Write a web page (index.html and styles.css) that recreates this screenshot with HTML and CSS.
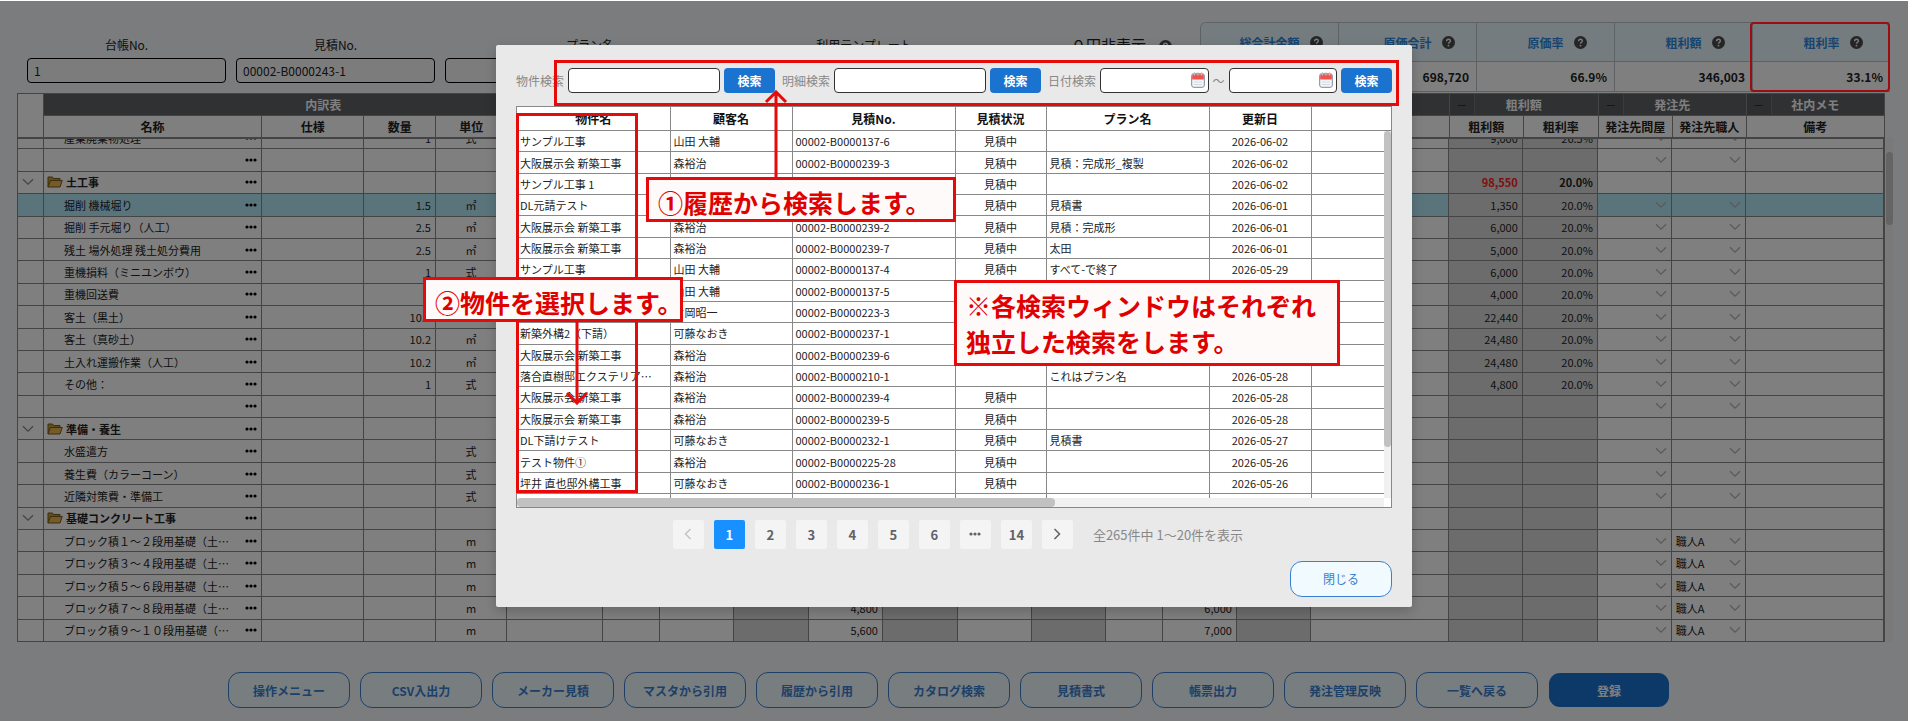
FILE: index.html
```
<!DOCTYPE html>
<html lang="ja">
<head>
    <meta charset="UTF-8">
    <meta name="viewport" content="width=device-width, initial-scale=1.0">
    <title>見積作成</title>
    <link rel="stylesheet" href="styles.css">
</head>
<body>

    <!-- アイコン定義 -->
    <svg class="sprite" aria-hidden="true">
        <symbol id="icon-help" viewBox="0 0 14 14">
            <circle cx="7" cy="7" r="7" fill="#4a4a4a"/>
            <path d="M5 5.6C5 4.2 5.9 3.5 7 3.5s2 .7 2 1.8c0 1.4-2 1.5-2 3" fill="none" stroke="#f6f8fc" stroke-width="1.5"/>
            <circle cx="7" cy="10.3" r="1" fill="#f6f8fc"/>
        </symbol>
        <symbol id="icon-dots" viewBox="0 0 12 4">
            <circle cx="2" cy="2" r="1.6"/>
            <circle cx="6" cy="2" r="1.6"/>
            <circle cx="10" cy="2" r="1.6"/>
        </symbol>
        <symbol id="icon-down" viewBox="0 0 12 8">
            <path d="M1 1.2l5 5 5-5" fill="none" stroke="currentColor" stroke-width="1.3"/>
        </symbol>
        <symbol id="icon-folder" viewBox="0 0 16 12">
            <path d="M1 11V1h4.500l1.200 1.500H13V4.500" fill="#c99a3a" stroke="#7a5a1c"/>
            <path d="M1 11L3.500 4.500H15.300L13 11z" fill="#e8b850" stroke="#7a5a1c"/>
        </symbol>
        <symbol id="icon-calendar" viewBox="0 0 14 16">
            <rect x=".7" y="1.700" width="12.600" height="13.600" rx="2" fill="#f4f6f9" stroke="#7c8696"/>
            <path d="M1.200 7.500V3.700a1.500 1.500 0 0 1 1.500-1.500h8.600a1.500 1.500 0 0 1 1.500 1.500v3.800z" fill="#f0504e"/>
            <path d="M3.500 .3v3.200M7 .3v3.200M10.500 .3v3.200" stroke="#b9c0ca" stroke-width="1.200"/>
            <path d="M3 10h8M3 12.500h8" stroke="#d3d9e2"/>
        </symbol>
    </svg>

    <div class="screen">

        <!-- 見積ヘッダー -->
        <div class="topbar">
            <div class="fields">
                <div class="field field-s">
                    <label for="ledgerNo">台帳No.</label>
                    <input type="text" id="ledgerNo" value="1">
                </div>
                <div class="field field-s">
                    <label for="estimateNo">見積No.</label>
                    <input type="text" id="estimateNo" value="00002-B0000243-1">
                </div>
                <div class="field field-l">
                    <label for="planName">プラン名</label>
                    <input type="text" id="planName">
                </div>
                <div class="field field-m">
                    <label for="template">利用テンプレート</label>
                    <input type="text" id="template">
                </div>
                <div class="field field-check">
                    <label for="hideZero">０円非表示 <svg class="help"><use href="#icon-help"/></svg></label>
                    <input type="checkbox" id="hideZero">
                </div>
            </div>

            <div class="summary">
                <div class="sum-cell">
                    <div class="sum-label"><span>総合計金額</span><svg class="help"><use href="#icon-help"/></svg></div>
                    <div class="sum-value"></div>
                </div>
                <div class="sum-cell">
                    <div class="sum-label"><span>原価合計</span><svg class="help"><use href="#icon-help"/></svg></div>
                    <div class="sum-value">698,720</div>
                </div>
                <div class="sum-cell">
                    <div class="sum-label"><span>原価率</span><svg class="help"><use href="#icon-help"/></svg></div>
                    <div class="sum-value">66.9%</div>
                </div>
                <div class="sum-cell">
                    <div class="sum-label"><span>粗利額</span><svg class="help"><use href="#icon-help"/></svg></div>
                    <div class="sum-value">346,003</div>
                </div>
                <div class="sum-cell">
                    <div class="sum-label"><span>粗利率</span><svg class="help"><use href="#icon-help"/></svg></div>
                    <div class="sum-value">33.1%</div>
                </div>
            </div>
        </div>

        <!-- 内訳表 -->
        <div class="sheet">
            <table class="grid grid-head">
                <thead>
                    <tr class="group">
                        <th rowspan="2" class="corner"></th>
                        <th colspan="5">内訳表</th>
                        <th colspan="11"></th>
                        <th colspan="2"><button type="button" class="fold">－</button>粗利額</th>
                        <th colspan="2"><button type="button" class="fold">－</button>発注先</th>
                        <th><button type="button" class="fold">－</button>社内メモ</th>
                    </tr>
                    <tr>
                        <th>名称</th><th>仕様</th><th>数量</th><th>単位</th><th></th>
                        <th></th><th></th><th></th><th></th><th></th><th></th>
                        <th></th><th></th><th></th><th></th><th></th>
                        <th>粗利額</th><th>粗利率</th><th>発注先問屋</th><th>発注先職人</th><th>備考</th>
                    </tr>
                </thead>
            </table>
            <div class="grid-scroll">
                <table class="grid grid-body">
                    <tbody id="detailRows"></tbody>
                </table>
            </div>
            <div class="sheet-bar"><div class="sheet-thumb"></div></div>
        </div>

        <!-- フッターボタン -->
        <div class="actions">
            <button type="button" class="action">操作メニュー</button>
            <button type="button" class="action">CSV入出力</button>
            <button type="button" class="action">メーカー見積</button>
            <button type="button" class="action">マスタから引用</button>
            <button type="button" class="action">履歴から引用</button>
            <button type="button" class="action">カタログ検索</button>
            <button type="button" class="action">見積書式</button>
            <button type="button" class="action">帳票出力</button>
            <button type="button" class="action">発注管理反映</button>
            <button type="button" class="action">一覧へ戻る</button>
            <button type="button" class="action action-main">登録</button>
        </div>

        <!-- 履歴検索ダイアログ -->
        <div class="mask">
            <div class="frame frame-total"></div>

            <div class="dialog" role="dialog" aria-label="履歴検索">
                <div class="search">
                    <label for="searchProject">物件検索</label>
                    <input type="text" id="searchProject">
                    <button type="button" class="search-btn">検索</button>
                    <label class="next" for="searchDetail">明細検索</label>
                    <input type="text" id="searchDetail">
                    <button type="button" class="search-btn">検索</button>
                    <label class="next" for="dateFrom">日付検索</label>
                    <div class="date">
                        <input type="text" id="dateFrom">
                        <svg><use href="#icon-calendar"/></svg>
                    </div>
                    <span>～</span>
                    <div class="date">
                        <input type="text" id="dateTo" aria-label="日付検索 終了">
                        <svg><use href="#icon-calendar"/></svg>
                    </div>
                    <button type="button" class="search-btn">検索</button>
                </div>

                <div class="history">
                    <table class="list list-head">
                        <colgroup><col class="c-name"><col class="c-client"><col class="c-no"><col class="c-state"><col class="c-plan"><col class="c-date"><col></colgroup>
                        <thead>
                            <tr><th>物件名</th><th>顧客名</th><th>見積No.</th><th>見積状況</th><th>プラン名</th><th>更新日</th><th></th></tr>
                        </thead>
                    </table>
                    <div class="history-view">
                        <div class="history-rows">
                            <table class="list list-body">
                                <colgroup><col class="c-name"><col class="c-client"><col class="c-no"><col class="c-state"><col class="c-plan"><col class="c-date"><col></colgroup>
                                <tbody id="historyRows"></tbody>
                            </table>
                        </div>
                        <div class="bar-y"><div class="thumb-y"></div></div>
                        <div class="bar-x"><div class="thumb-x"></div></div>
                    </div>
                </div>

                <div class="pager">
                    <button type="button" class="off" aria-label="前へ"><svg viewBox="0 0 8 12"><path d="M6.500 1L1.500 6l5 5"/></svg></button>
                    <button type="button" class="on">1</button>
                    <button type="button">2</button>
                    <button type="button">3</button>
                    <button type="button">4</button>
                    <button type="button">5</button>
                    <button type="button">6</button>
                    <button type="button" aria-label="続き"><svg class="more"><use href="#icon-dots"/></svg></button>
                    <button type="button">14</button>
                    <button type="button" aria-label="次へ"><svg viewBox="0 0 8 12"><path d="M1.500 1l5 5-5 5"/></svg></button>
                    <span>全265件中 1～20件を表示</span>
                </div>

                <div class="dialog-foot">
                    <button type="button" class="close">閉じる</button>
                </div>

                <!-- 操作説明 -->
                <div class="frame frame-search"></div>
                <div class="frame frame-name"></div>
                <svg class="arrow arrow-up" viewBox="0 0 24 88"><path d="M12 88V2M2 12L12 2l10 10"/></svg>
                <svg class="arrow arrow-down" viewBox="0 0 24 84"><path d="M12 0v82M2 72l10 10 10-10"/></svg>
                <div class="note note-1">①履歴から検索します。</div>
                <div class="note note-2">②物件を選択します。</div>
                <div class="note note-3">※各検索ウィンドウはそれぞれ<br>独立した検索をします。</div>
            </div>
        </div>
    </div>

    <script src="script.js"></script>
</body>
</html>
```

FILE: styles.css
```
/* 基本 */
* {
    box-sizing: border-box;
}

body {
    margin: 0;
    background: #fff;
    color: #222;
    font-family: "Noto Sans CJK JP", sans-serif;
    font-size: 11px;
}

button, input {
    font-family: inherit;
    font-size: 12px;
    color: inherit;
    margin: 0;
}

button {
    cursor: pointer;
}

.sprite {
    display: none;
}

.screen {
    position: relative;
    margin: 1px 11px 0 0;
    min-height: calc(100vh - 1px);
    padding: 0 23px 12px 17px;
    background: #f6f8fc;
}

/* 見積ヘッダー */
.topbar {
    display: flex;
    justify-content: space-between;
    align-items: flex-end;
    height: 92px;
    margin-right: -5px;
    padding: 0 0 1px 10px;
}

.fields {
    display: flex;
    gap: 10px;
    padding-bottom: 9px;
}

.field {
    display: flex;
    flex-direction: column;
    align-items: center;
    gap: 4px;
    font-size: 12px;
}

.field label {
    line-height: 18px;
}

.field input[type="text"] {
    width: 100%;
    height: 25px;
    padding: 0 6px;
    border: 1px solid #000;
    border-radius: 4px;
    background: #f8f9fb;
}

.field-s {
    width: 199px;
}

.field-l {
    width: 290px;
}

.field-m {
    width: 238px;
}

.field-check {
    padding-left: 78px;
    font-size: 15px;
}

.help {
    width: 13px;
    height: 13px;
    margin-left: 10px;
    vertical-align: -2px;
}

.summary {
    display: flex;
    width: 690px;
}

.sum-cell {
    flex: 1;
    border: 1px solid #bcc4c8;
    border-right: 0;
    background: #fff;
}

.sum-cell:first-child {
    border-top-left-radius: 6px;
    overflow: hidden;
}

.sum-label {
    display: grid;
    grid-template-columns: 1fr auto 1fr;
    align-items: center;
    height: 39px;
    background: #e8f8ff;
    border-bottom: 1px solid #bcc4c8;
    color: #3088e0;
    font-size: 12px;
    font-weight: 700;
}

.sum-label span {
    grid-column: 2;
}

.sum-value {
    height: 29px;
    padding-right: 7px;
    line-height: 29px;
    text-align: right;
    font-size: 12px;
    font-weight: 700;
}

/* 内訳表 */
.sheet {
    position: relative;
}

.grid {
    width: 100%;
    table-layout: fixed;
    border-collapse: collapse;
    background: #fff;
}

.grid th, .grid td {
    height: 22px;
    padding: 0 4px;
    border: 1px solid #888;
    overflow: hidden;
    white-space: nowrap;
    line-height: 16px;
}

.grid th {
    padding: 0;
    font-size: 12px;
}

.grid-head .group th {
    position: relative;
    background: #606266;
    color: #fff;
}

.grid-head .group .corner {
    background: #fff;
}

.grid .fold {
    position: absolute;
    left: 0;
    top: 0;
    width: 25px;
    height: 22px;
    padding: 0;
    border: 0;
    border-right: 1px solid #777;
    background: #5a5c60;
    color: #222;
    font-size: 11px;
}

/* 一行目は途中までスクロールされた状態 */
.grid-scroll {
    display: flex;
    align-items: flex-end;
    height: 504px;
    overflow: hidden;
    border-top: 1px solid #888;
    border-right: 1px solid #888;
}

.grid-body {
    height: 516px;
}

.grid .num {
    text-align: right;
}

.grid .mid {
    text-align: center;
}

.grid .gray {
    background: #d9d9d9;
}

.grid .selected td:not(.gray) {
    background: #b4e8f8;
}

.folder td {
    font-weight: 700;
}

.grid .minus {
    color: #ff2020;
}

.item {
    display: flex;
    align-items: center;
    justify-content: space-between;
}

.item-name {
    width: 168px;
    margin-left: 16px;
    overflow: hidden;
    text-overflow: ellipsis;
}

.folder .item-name {
    width: auto;
    flex: 1;
    margin-left: 3px;
}

.item-folder {
    width: 16px;
    height: 12px;
    margin-left: -1px;
}

.item-dots {
    width: 12px;
    height: 4px;
}

.pick {
    display: flex;
    align-items: center;
}

.pick svg, .toggle {
    width: 12px;
    height: 8px;
    margin-left: auto;
    color: #b4b4b4;
}

.toggle {
    display: block;
    margin: 0;
    color: #888;
}

.sheet-bar {
    position: absolute;
    right: -8px;
    top: 44px;
    bottom: 0;
    width: 7px;
    background: #f2f3f5;
}

.sheet-thumb {
    height: 73px;
    margin-top: 15px;
    border-radius: 4px;
    background: #c8c8c8;
}

/* フッターボタン */
.actions {
    display: flex;
    gap: 10px;
    max-width: 1446px;
    margin: 30px auto 0;
    padding-right: 4px;
}

.action {
    flex: 1;
    height: 36px;
    padding: 0;
    border: 1px solid #3a80d0;
    border-radius: 12px;
    background: #f0faff;
    color: #3a80d0;
    font-weight: 700;
}

.action-main {
    border-color: transparent;
    background: #1b73d0;
    background-clip: padding-box;
    color: #fff;
}

/* 履歴検索ダイアログ */
.mask {
    position: absolute;
    inset: 0;
    display: flex;
    justify-content: center;
    align-items: flex-start;
    padding-top: 44px;
    background: rgba(0, 0, 0, 0.5);
}

.dialog {
    position: relative;
    width: 916px;
    padding: 23px 20px 10px;
    border-radius: 2px;
    background: #e9e9e9;
    box-shadow: 0 4px 12px rgba(0, 0, 0, 0.2);
}

.search {
    display: flex;
    align-items: center;
    gap: 4px;
    color: #888;
    font-size: 12px;
}

.search input {
    width: 152px;
    height: 25px;
    border: 1px solid #333;
    border-radius: 4px;
    background: #fff;
}

.search .next {
    margin-left: 3px;
}

.search .date {
    position: relative;
    flex: 1;
}

.search .date input {
    display: block;
    width: 100%;
}

.date svg {
    position: absolute;
    right: 4px;
    top: 4px;
    width: 14px;
    height: 16px;
}

.search-btn {
    width: 51px;
    height: 25px;
    padding: 0;
    border: 0;
    border-radius: 4px;
    background: #1b73d0;
    color: #fff;
    font-weight: 700;
}

.history {
    margin-top: 13px;
    border: 1px solid #888;
    background: #fff;
}

.list {
    width: 100%;
    table-layout: fixed;
    border-collapse: collapse;
}

.list th {
    height: 23px;
    padding: 0;
    border: solid #888;
    border-width: 0 0 1px 1px;
    color: #111;
    font-size: 12px;
}

.list td {
    height: 21px;
    padding: 0 3px;
    border: solid #888;
    border-width: 0 0 1px 1px;
    overflow: hidden;
    text-overflow: ellipsis;
    white-space: nowrap;
    line-height: 16px;
}

.list th:first-child, .list td:first-child {
    border-left: 0;
}

.list td:first-child {
    padding-right: 14px;
}

.list .mid {
    text-align: center;
}

.c-name { width: 153px; }
.c-client { width: 122px; }
.c-no { width: 163px; }
.c-state { width: 91px; }
.c-plan { width: 163px; }
.c-date { width: 102px; }

.history-view {
    display: grid;
    grid-template-columns: 1fr 7px;
    grid-template-rows: 367px 9px;
}

.history-rows {
    overflow: hidden;
}

.list-body {
    height: 385px;
}

.bar-y, .bar-x {
    background: #f1f1f1;
}

.thumb-y {
    height: 316px;
    border-radius: 4px;
    background: #c1c1c1;
}

.thumb-x {
    width: 62%;
    height: 9px;
    border-radius: 4px;
    background: #c1c1c1;
}

.pager {
    display: flex;
    justify-content: center;
    align-items: center;
    gap: 10px;
    margin-top: 12px;
    padding-left: 8px;
    color: #888;
    font-size: 13px;
}

.pager button {
    display: flex;
    justify-content: center;
    align-items: center;
    width: 31px;
    height: 29px;
    padding: 0;
    border: 0;
    border-radius: 2px;
    background: #f4f4f4;
    color: #606266;
    font-size: 13px;
    font-weight: 700;
}

.pager .on {
    background: #1890ff;
    color: #fff;
}

.pager .off {
    color: #c0c4cc;
}

.pager svg {
    width: 8px;
    height: 12px;
    fill: none;
    stroke: currentColor;
    stroke-width: 1.5;
}

.pager .more {
    width: 12px;
    height: 4px;
    fill: currentColor;
    stroke: none;
}

.pager span {
    margin-left: 10px;
}

.dialog-foot {
    display: flex;
    justify-content: flex-end;
    margin-top: 12px;
}

.close {
    width: 102px;
    height: 36px;
    padding: 0;
    border: 1px solid #3a80d0;
    border-radius: 12px;
    background: #f0faff;
    color: #3a80d0;
}

/* 操作説明 */
.frame, .note, .arrow {
    position: absolute;
}

.frame {
    border: 3px solid #e60a0a;
    pointer-events: none;
}

.frame-total {
    top: 21px;
    right: 18px;
    width: 140px;
    height: 70px;
    border: 2px solid #9c0c10;
    border-radius: 4px;
}

.frame-search {
    left: 58px;
    top: 15px;
    width: 845px;
    height: 46px;
}

.frame-name {
    left: 20px;
    top: 68px;
    width: 122px;
    height: 380px;
}

.note {
    padding: 4px 9px 0;
    border: 3px solid #e60a0a;
    background: #fffafa;
    color: #e00000;
    font-size: 25px;
    font-weight: 700;
    line-height: 36px;
    white-space: nowrap;
}

.note-1 {
    left: 150px;
    top: 132px;
    width: 310px;
    height: 45px;
}

.note-2 {
    left: -73px;
    top: 232px;
    width: 260px;
    height: 45px;
}

.note-3 {
    left: 458px;
    top: 235px;
    width: 386px;
    height: 86px;
}

.arrow {
    width: 24px;
    fill: none;
    stroke: #e60a0a;
    stroke-width: 3;
}

.arrow-up {
    left: 268px;
    top: 45px;
    height: 88px;
}

.arrow-down {
    left: 69px;
    top: 276px;
    height: 84px;
}
```

FILE: script.js
```
// 列幅（左から順番）
const widths = [26, 218, 102, 72, 71, 96, 57, 74, 75, 74, 75, 74, 74, 57, 74, 74, 138, 74, 75, 74, 74, 138];
const total = widths.reduce((a, b) => a + b, 0);

document.querySelectorAll('.grid').forEach(table => {
    const group = document.createElement('colgroup');
    widths.forEach(w => {
        const col = document.createElement('col');
        col.style.width = (w / total * 100) + '%';
        group.appendChild(col);
    });
    table.prepend(group);
});

// 内訳データ
const details = [
    { name: '産業廃棄物処理', qty: '1', unit: '式', profit: '9,000', rate: '26.5%' },
    { name: '' },
    { name: '土工事', folder: true, profit: '98,550', rate: '20.0%' },
    { name: '掘削 機械堀り', qty: '1.5', unit: '㎡', profit: '1,350', rate: '20.0%', selected: true },
    { name: '掘削 手元堀り（人工）', qty: '2.5', unit: '㎡', profit: '6,000', rate: '20.0%' },
    { name: '残土 場外処理 残土処分費用', qty: '2.5', unit: '㎡', profit: '5,000', rate: '20.0%' },
    { name: '重機損料（ミニユンボウ）', qty: '1', unit: '式', profit: '6,000', rate: '20.0%' },
    { name: '重機回送費', qty: '', unit: '', profit: '4,000', rate: '20.0%' },
    { name: '客土（黒土）', qty: '10.2', unit: '', profit: '22,440', rate: '20.0%' },
    { name: '客土（真砂土）', qty: '10.2', unit: '㎡', profit: '24,480', rate: '20.0%' },
    { name: '土入れ運搬作業（人工）', qty: '10.2', unit: '㎡', profit: '24,480', rate: '20.0%' },
    { name: 'その他：', qty: '1', unit: '式', profit: '4,800', rate: '20.0%' },
    { name: '' },
    { name: '準備・養生', folder: true },
    { name: '水盛遣方', unit: '式' },
    { name: '養生費（カラーコーン）', unit: '式' },
    { name: '近隣対策費・準備工', unit: '式' },
    { name: '基礎コンクリート工事', folder: true },
    { name: 'ブロック積１～２段用基礎（土間下）', unit: 'm', worker: '職人A' },
    { name: 'ブロック積３～４段用基礎（土間下）', unit: 'm', worker: '職人A' },
    { name: 'ブロック積５～６段用基礎（土間下）', unit: 'm', worker: '職人A' },
    { name: 'ブロック積７～８段用基礎（土間下）', unit: 'm', worker: '職人A', cost: '4,800', price: '6,000' },
    { name: 'ブロック積９～１０段用基礎（土間下）', unit: 'm', worker: '職人A', cost: '5,600', price: '7,000' }
];

const down = '<svg><use href="#icon-down"/></svg>';

function pick(row, text) {
    return row.folder ? '' : `<div class="pick">${text || ''}${down}</div>`;
}

document.getElementById('detailRows').innerHTML = details.map(row => `
    <tr class="${row.folder ? 'folder' : ''} ${row.selected ? 'selected' : ''}">
        <td>${row.folder ? '<svg class="toggle"><use href="#icon-down"/></svg>' : ''}</td>
        <td><div class="item">
            ${row.folder ? '<svg class="item-folder"><use href="#icon-folder"/></svg>' : ''}
            <span class="item-name">${row.name}</span>
            <svg class="item-dots"><use href="#icon-dots"/></svg>
        </div></td>
        <td></td>
        <td class="num">${row.qty || ''}</td>
        <td class="mid">${row.unit || ''}</td>
        <td></td><td></td><td></td>
        <td class="gray"></td>
        <td class="num">${row.cost || ''}</td>
        <td class="gray"></td>
        <td></td>
        <td class="gray"></td>
        <td></td>
        <td class="num">${row.price || ''}</td>
        <td class="gray"></td>
        <td></td>
        <td class="gray num ${row.folder ? 'minus' : ''}">${row.profit || ''}</td>
        <td class="gray num">${row.rate || ''}</td>
        <td>${pick(row)}</td>
        <td>${pick(row, row.worker)}</td>
        <td></td>
    </tr>`).join('');

// 履歴データ
const rows = [
    ['サンプル工事', '山田 大輔', '00002-B0000137-6', '見積中', '', '2026-06-02'],
    ['大阪展示会 新築工事', '森裕治', '00002-B0000239-3', '見積中', '見積：完成形_複製', '2026-06-02'],
    ['サンプル工事 1', '', '', '見積中', '', '2026-06-02'],
    ['DL元請テスト', '', '', '見積中', '見積書', '2026-06-01'],
    ['大阪展示会 新築工事', '森裕治', '00002-B0000239-2', '見積中', '見積：完成形', '2026-06-01'],
    ['大阪展示会 新築工事', '森裕治', '00002-B0000239-7', '見積中', '太田', '2026-06-01'],
    ['サンプル工事', '山田 大輔', '00002-B0000137-4', '見積中', 'すべて-で終了', '2026-05-29'],
    ['', '山田 大輔', '00002-B0000137-5', '', '', ''],
    ['', '片岡昭一', '00002-B0000223-3', '', '', ''],
    ['新築外構2（下請）', '可藤なおき', '00002-B0000237-1', '', '', ''],
    ['大阪展示会 新築工事', '森裕治', '00002-B0000239-6', '', '', ''],
    ['落合直樹邸エクステリア新築工事', '森裕治', '00002-B0000210-1', '', 'これはプラン名', '2026-05-28'],
    ['大阪展示会 新築工事', '森裕治', '00002-B0000239-4', '見積中', '', '2026-05-28'],
    ['大阪展示会 新築工事', '森裕治', '00002-B0000239-5', '見積中', '', '2026-05-28'],
    ['DL下請けテスト', '可藤なおき', '00002-B0000232-1', '見積中', '見積書', '2026-05-27'],
    ['テスト物件①', '森裕治', '00002-B0000225-28', '見積中', '', '2026-05-26'],
    ['坪井 直也邸外構工事', '可藤なおき', '00002-B0000236-1', '見積中', '', '2026-05-26'],
    ['', '', '', '', '', '']
];

document.getElementById('historyRows').innerHTML = rows.map(r => `
    <tr>
        <td>${r[0]}</td><td>${r[1]}</td><td>${r[2]}</td>
        <td class="mid">${r[3]}</td><td>${r[4]}</td><td class="mid">${r[5]}</td><td></td>
    </tr>`).join('');
```
